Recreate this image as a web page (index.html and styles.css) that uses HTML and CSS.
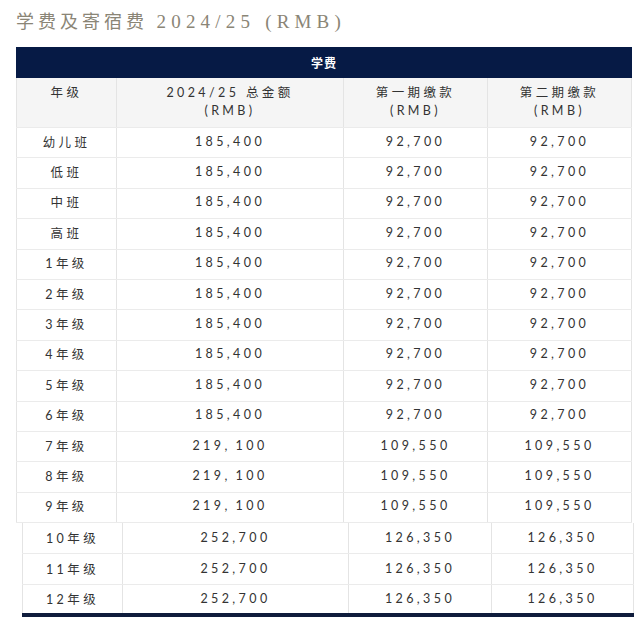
FILE: index.html
```html
<!DOCTYPE html>
<html lang="zh">
<head>
<meta charset="utf-8">
<link rel="stylesheet" href="styles.css">
</head>
<body>
<h1 class="title">学费及寄宿费 <span class="title-latin">2024/25 (RMB)</span></h1>
<table class="fees fees-top">
  <colgroup><col class="c1"><col class="c2"><col class="c3"><col class="c4"></colgroup>
  <thead>
    <tr class="band"><th colspan="4">学费</th></tr>
    <tr class="heads">
      <th>年级</th>
      <th>2024/25 总金额<br>(RMB)</th>
      <th>第一期缴款<br>(RMB)</th>
      <th>第二期缴款<br>(RMB)</th>
    </tr>
  </thead>
  <tbody>
    <tr><td>幼儿班</td><td>185,400</td><td>92,700</td><td>92,700</td></tr>
    <tr><td>低班</td><td>185,400</td><td>92,700</td><td>92,700</td></tr>
    <tr><td>中班</td><td>185,400</td><td>92,700</td><td>92,700</td></tr>
    <tr><td>高班</td><td>185,400</td><td>92,700</td><td>92,700</td></tr>
    <tr><td>1年级</td><td>185,400</td><td>92,700</td><td>92,700</td></tr>
    <tr><td>2年级</td><td>185,400</td><td>92,700</td><td>92,700</td></tr>
    <tr><td>3年级</td><td>185,400</td><td>92,700</td><td>92,700</td></tr>
    <tr><td>4年级</td><td>185,400</td><td>92,700</td><td>92,700</td></tr>
    <tr><td>5年级</td><td>185,400</td><td>92,700</td><td>92,700</td></tr>
    <tr><td>6年级</td><td>185,400</td><td>92,700</td><td>92,700</td></tr>
    <tr><td>7年级</td><td>219,&thinsp;100</td><td>109,550</td><td>109,550</td></tr>
    <tr><td>8年级</td><td>219,&thinsp;100</td><td>109,550</td><td>109,550</td></tr>
    <tr><td>9年级</td><td>219,&thinsp;100</td><td>109,550</td><td>109,550</td></tr>
  </tbody>
</table>
<table class="fees fees-bottom">
  <colgroup><col class="b1"><col class="b2"><col class="b3"><col class="b4"></colgroup>
  <tbody>
    <tr><td>10年级</td><td>252,700</td><td>126,350</td><td>126,350</td></tr>
    <tr><td>11年级</td><td>252,700</td><td>126,350</td><td>126,350</td></tr>
    <tr><td>12年级</td><td>252,700</td><td>126,350</td><td>126,350</td></tr>
  </tbody>
</table>
</body>
</html>
```
FILE: styles.css
```css
html, body {
  margin: 0;
  padding: 0;
  background: #ffffff;
  overflow: hidden;
}
.title {
  margin: 0;
  height: 47px;
  padding: 0 0 0 16px;
  box-sizing: border-box;
  line-height: 44px;
  font-family: "Liberation Serif", "Noto Sans CJK SC", serif;
  font-weight: 400;
  font-size: 18px;
  letter-spacing: 4px;
  color: #8a8576;
  white-space: nowrap;
}
.title-latin {
  font-size: 19px;
  letter-spacing: 5.2px;
}
.fees {
  border-collapse: collapse;
  table-layout: fixed;
  font-family: Lato, "Noto Sans CJK SC", sans-serif;
  font-size: 12.5px;
  letter-spacing: 3.4px;
  color: #333333;
}
.fees td, .fees th {
  padding: 0;
  text-align: center;
  font-weight: 400;
  border-left: 1px solid #e4e4e4;
  border-right: 1px solid #e4e4e4;
  border-bottom: 1px solid #ebebeb;
}
.fees-top {
  margin-left: 16px;
  width: 615px;
}
.c1 { width: 100px; }
.c2 { width: 227px; }
.c3 { width: 144px; }
.c4 { width: 144px; }
.band th {
  height: 30px;
  background: #061a45;
  color: #ffffff;
  font-weight: 700;
  font-size: 12px;
  letter-spacing: 1px;
  border-color: #061a45;
}
.heads th {
  height: 50px;
  box-sizing: border-box;
  background: #f5f5f5;
  vertical-align: top;
  padding-top: 6px;
  line-height: 18px;
}
.fees-top td {
  height: 30.4px;
  box-sizing: border-box;
  background: #ffffff;
  padding-bottom: 3px;
}
.fees-bottom {
  margin-left: 22px;
  width: 611px;
  border-bottom: 4px solid #0f1c3c;
}
.b1 { width: 100px; }
.b2 { width: 226px; }
.b3 { width: 143px; }
.b4 { width: 142px; }
.fees-bottom td {
  height: 30.5px;
  box-sizing: border-box;
  background: #ffffff;
  padding-bottom: 1px;
}
```
